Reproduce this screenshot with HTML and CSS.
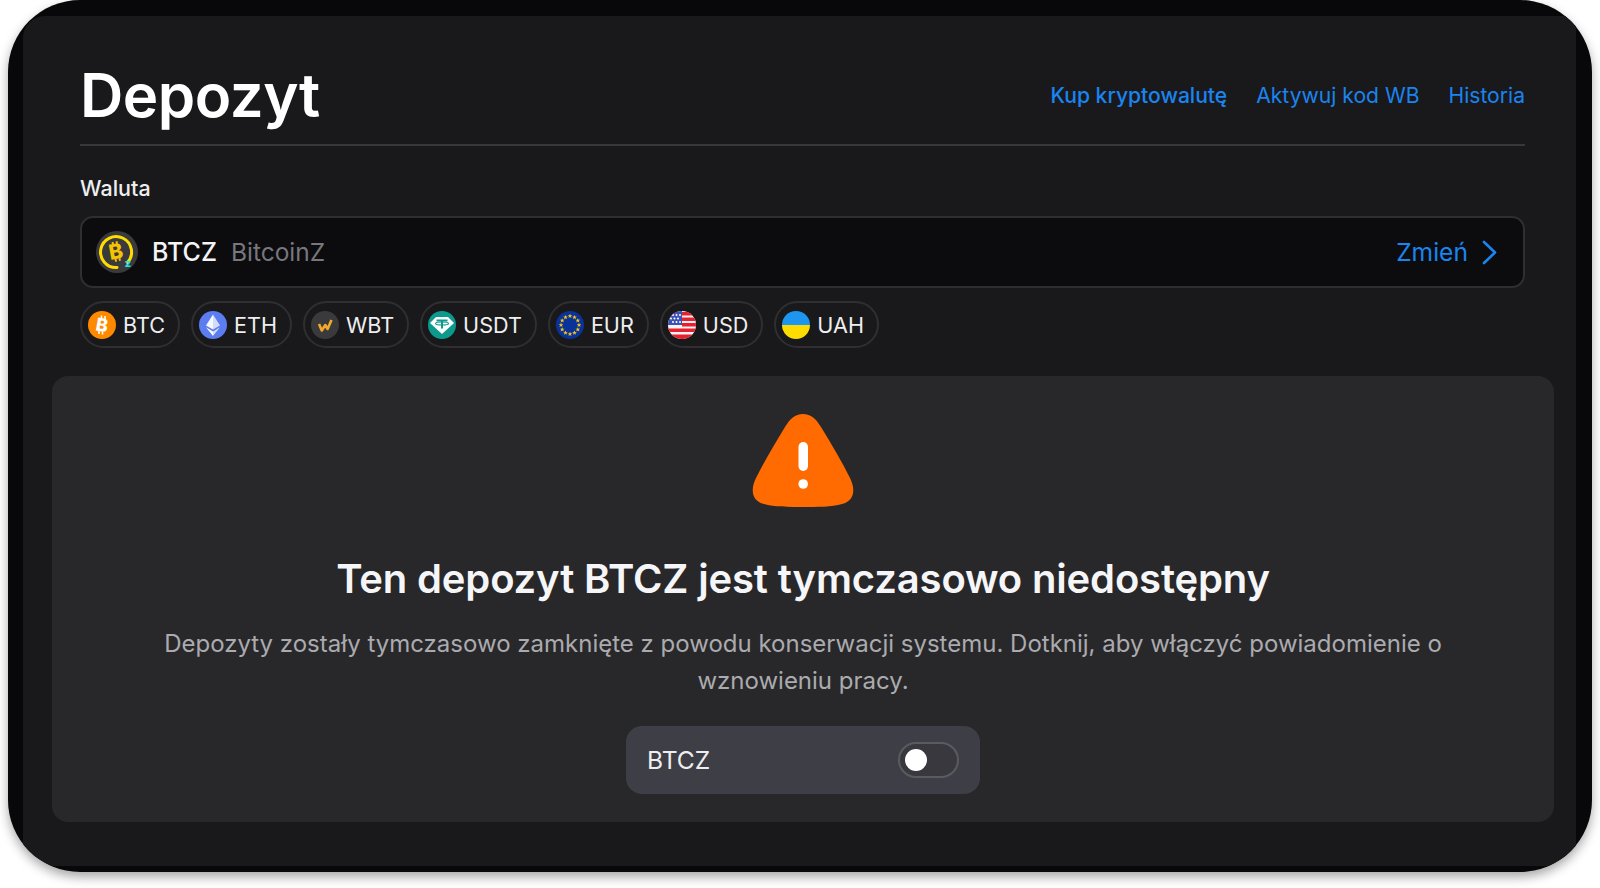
FILE: index.html
```html
<!DOCTYPE html>
<html lang="pl">
<head>
<meta charset="utf-8">
<title>Depozyt</title>
<link rel="stylesheet" href="styles.css">
</head>
<body>
<svg class="defs" width="0" height="0" aria-hidden="true">
  <defs>
    <polygon id="star" points="0,-2.3 .7,-.7 2.3,-.7 1,.3 1.5,2 0,1 -1.5,2 -1,.3 -2.3,-.7 -.7,-.7"/>
    <clipPath id="disc"><circle cx="14" cy="14" r="14"/></clipPath>
  </defs>
</svg>
<div class="frame">
<main class="screen">
  <header class="top">
    <h1 class="title">Depozyt</h1>
    <nav class="links">
      <a class="link">Kup kryptowalutę</a>
      <a class="link">Aktywuj kod WB</a>
      <a class="link">Historia</a>
    </nav>
  </header>
  <section class="currency">
    <div class="label">Waluta</div>
    <div class="select">
      <svg class="btcz" viewBox="0 0 42 42" width="42" height="42">
        <circle cx="21" cy="21" r="21" fill="#3a3a3d"/>
        <path d="M31.500 31.500A15.500 15.500 0 1 0 21 36.500" fill="none" stroke="#ffdd00" stroke-width="3" stroke-linecap="round"/>
        <text class="coin-b" x="20" y="28" font-size="21" fill="#f5c400" transform="rotate(-10 20 21)">B</text>
        <path d="M16.500 11l.6 2.600M20.500 10.300l.6 2.600M19.500 28l.6 2.600M23.400 27.200l.6 2.600" stroke="#f5c400" stroke-width="2" fill="none"/>
        <text class="coin-z" x="32" y="36" font-size="11" fill="#22e0ea">z</text>
      </svg>
      <span class="code">BTCZ</span>
      <span class="name">BitcoinZ</span>
      <span class="change">Zmień</span>
      <svg class="chev" viewBox="0 0 16 25" width="16" height="25"><path d="M2 2l11 10.500L2 23" fill="none" stroke="#1a84f0" stroke-width="2.600" stroke-linecap="round" stroke-linejoin="round"/></svg>
    </div>
    <div class="chips">
      <div class="chip">
        <svg class="ico" viewBox="0 0 28 28"><circle cx="14" cy="14" r="14" fill="#ff8a00"/><text class="coin-b" x="14" y="20.500" font-size="18" fill="#fff" transform="rotate(10 14 14)">B</text><path d="M13.500 4.500v3M17 5v3M11 20v3M14.500 20.500v3" stroke="#fff" stroke-width="1.500"/></svg>
        <span>BTC</span>
      </div>
      <div class="chip">
        <svg class="ico" viewBox="0 0 28 28"><circle cx="14" cy="14" r="14" fill="#5b7df0"/><path d="M14 3.500l-7 11L14 18.500z" fill="#fff" opacity=".95"/><path d="M14 3.500l7 11L14 18.500z" fill="#d5dcfb"/><path d="M7 16.200L14 25v-4.600z" fill="#fff"/><path d="M21 16.200L14 25v-4.600z" fill="#d5dcfb"/></svg>
        <span>ETH</span>
      </div>
      <div class="chip">
        <svg class="ico" viewBox="0 0 28 28"><circle cx="14" cy="14" r="14" fill="#3a3a3d"/><path d="M8 13l2.800 6.500 3.500-5.500 2.300 4L20.500 9" fill="none" stroke="#f0a92a" stroke-width="2.600" stroke-linejoin="round"/></svg>
        <span>WBT</span>
      </div>
      <div class="chip">
        <svg class="ico" viewBox="0 0 28 28"><circle cx="14" cy="14" r="14" fill="#0b9a8d"/><path d="M8 6h12l6 6-12 11L2 12z" fill="#fff"/><path d="M8.500 9.500h11M14 9.500v8" stroke="#0b9a8d" stroke-width="2"/><ellipse cx="14" cy="12.500" rx="6.500" ry="1.500" fill="none" stroke="#0b9a8d" stroke-width="1.200"/></svg>
        <span>USDT</span>
      </div>
      <div class="chip">
        <svg class="ico" viewBox="0 0 28 28">
          <circle cx="14" cy="14" r="14" fill="#0a3399"/>
          <g fill="#f6c21c">
            <use href="#star" x="14" y="5"/><use href="#star" x="18.500" y="6.200"/><use href="#star" x="21.800" y="9.500"/><use href="#star" x="23" y="14"/><use href="#star" x="21.800" y="18.500"/><use href="#star" x="18.500" y="21.800"/><use href="#star" x="14" y="23"/><use href="#star" x="9.500" y="21.800"/><use href="#star" x="6.200" y="18.500"/><use href="#star" x="5" y="14"/><use href="#star" x="6.200" y="9.500"/><use href="#star" x="9.500" y="6.200"/>
          </g>
        </svg>
        <span>EUR</span>
      </div>
      <div class="chip">
        <svg class="ico" viewBox="0 0 28 28">
          <g clip-path="url(#disc)">
            <rect width="28" height="28" fill="#f4f4f6"/>
            <path d="M0 1h28v3.500H0zM14 6.500h14v3.500H14zM14 12h14v3.500H14zM0 17.500h28v3.500H0zM0 23.500h28v4.500H0z" fill="#e8202e"/>
            <rect width="14" height="14" fill="#3d52b4"/>
            <g fill="#fff"><circle cx="5" cy="4" r="1"/><circle cx="8.500" cy="4" r="1"/><circle cx="12" cy="4" r="1"/><circle cx="3" cy="7.500" r="1"/><circle cx="6.500" cy="7.500" r="1"/><circle cx="10" cy="7.500" r="1"/><circle cx="5" cy="11" r="1"/><circle cx="8.500" cy="11" r="1"/><circle cx="12" cy="11" r="1"/></g>
          </g>
        </svg>
        <span>USD</span>
      </div>
      <div class="chip">
        <svg class="ico" viewBox="0 0 28 28"><g clip-path="url(#disc)"><rect width="28" height="14" fill="#1d96f2"/><rect y="14" width="28" height="14" fill="#ffdc00"/></g></svg>
        <span>UAH</span>
      </div>
    </div>
  </section>
  <section class="panel">
    <svg class="warn" viewBox="0 0 102 93" width="102" height="93">
      <path d="M51 0C59 0 64 5 69 13C80 31 90 48 98 64C104 76 102 87 90 90C80 93 65 93 51 93C37 93 22 93 12 90C0 87-2 76 4 64C12 48 22 31 33 13C38 5 43 0 51 0Z" fill="#ff6b00"/>
      <rect x="46.500" y="28" width="9.500" height="29" rx="4.700" fill="#fff"/>
      <circle cx="51.200" cy="70" r="4.800" fill="#fff"/>
    </svg>
    <h2 class="heading">Ten depozyt BTCZ jest tymczasowo niedostępny</h2>
    <p class="desc">Depozyty zostały tymczasowo zamknięte z powodu konserwacji systemu. Dotknij, aby włączyć powiadomienie o wznowieniu pracy.</p>
    <div class="notify">
      <span class="notify-label">BTCZ</span>
      <span class="toggle"><span class="knob"></span></span>
    </div>
  </section>
</main>
</div>
</body>
</html>
```
FILE: styles.css
```css
* { box-sizing: border-box; }
html, body { margin: 0; padding: 0; }
body {
  background: #fff;
  font-family: Inter, "Noto Sans", sans-serif;
  height: 888px;
  overflow: hidden;
}
.defs { position: absolute; }
.frame {
  width: 1584px;
  height: 872px;
  margin: 0 8px;
  padding: 16px 16px 6px 15px;
  background: #08080a;
  border-radius: 72px;
  box-shadow: 0 5px 11px rgba(0, 0, 0, .35);
  overflow: hidden;
}
.screen {
  height: 100%;
  background: #19191b;
  border-top-left-radius: 22px;
  padding: 0 22px 0 29px;
  display: flex;
  flex-direction: column;
}
.top {
  height: 130px;
  display: flex;
  align-items: center;
  justify-content: space-between;
  border-bottom: 2px solid #38383a;
  margin: 0 29px 0 28px;
  padding-top: 30px;
}
.title {
  margin: 0;
  color: #fff;
  font-size: 60px;
  font-weight: 600;
  line-height: 72px;
  letter-spacing: -.5px;
}
.links { display: flex; gap: 29px; margin-top: 2px; }
.link {
  color: #1a84f0;
  font-size: 21.100px;
  font-weight: 400;
  line-height: 28px;
}
.link:first-child { font-weight: 500; }
.currency {
  margin: 0 29px 0 28px;
}
.label {
  margin-top: 29px;
  color: #eeeef0;
  font-size: 21.500px;
  font-weight: 500;
  line-height: 26px;
}
.select {
  margin-top: 15px;
  height: 72px;
  display: flex;
  align-items: center;
  padding: 0 25px 0 14px;
  background: #0c0c0e;
  border: 2px solid #2f2f32;
  border-radius: 13px;
}
.btcz { flex: none; }
.coin-b,
.coin-z {
  font-family: Inter, sans-serif;
  font-weight: 800;
  text-anchor: middle;
}
.code {
  margin-left: 14px;
  color: #f4f4f6;
  font-size: 25px;
  font-weight: 500;
}
.name {
  margin-left: 14px;
  color: #77777c;
  font-size: 24.500px;
}
.change {
  margin-left: auto;
  color: #1a84f0;
  font-size: 24.600px;
}
.chev { margin-left: 14px; flex: none; }
.chips {
  margin-top: 13px;
  display: flex;
  gap: 11px;
}
.chip {
  height: 47px;
  display: flex;
  align-items: center;
  gap: 7px;
  padding: 0 13px 0 6px;
  border: 2px solid #2f2f32;
  border-radius: 24px;
  color: #eeeef0;
  font-size: 21.600px;
  font-weight: 400;
}
.ico { width: 28px; height: 28px; flex: none; }
.panel {
  margin-top: 28px;
  height: 446px;
  background: #28282a;
  border-radius: 16px;
  display: flex;
  flex-direction: column;
  align-items: center;
  padding-top: 38px;
  text-align: center;
}
.warn { flex: none; }
.heading {
  margin: 47px 0 0;
  color: #f6f6f8;
  font-size: 40px;
  font-weight: 600;
  line-height: 50px;
  letter-spacing: -.15px;
}
.desc {
  margin: 21px 0 0;
  width: 1320px;
  color: #ababaf;
  font-size: 24px;
  line-height: 37px;
}
.notify {
  margin-top: 27px;
  width: 354px;
  height: 68px;
  display: flex;
  align-items: center;
  justify-content: space-between;
  padding: 0 21px 0 21px;
  background: #3e3e46;
  border-radius: 16px;
}
.notify-label {
  color: #eeeef0;
  font-size: 24.600px;
}
.toggle {
  width: 61px;
  height: 36px;
  display: flex;
  align-items: center;
  padding-left: 5px;
  border: 2px solid #5a5a61;
  border-radius: 18px;
  background: #38383e;
}
.knob {
  width: 22px;
  height: 22px;
  border-radius: 50%;
  background: #fff;
}
```
